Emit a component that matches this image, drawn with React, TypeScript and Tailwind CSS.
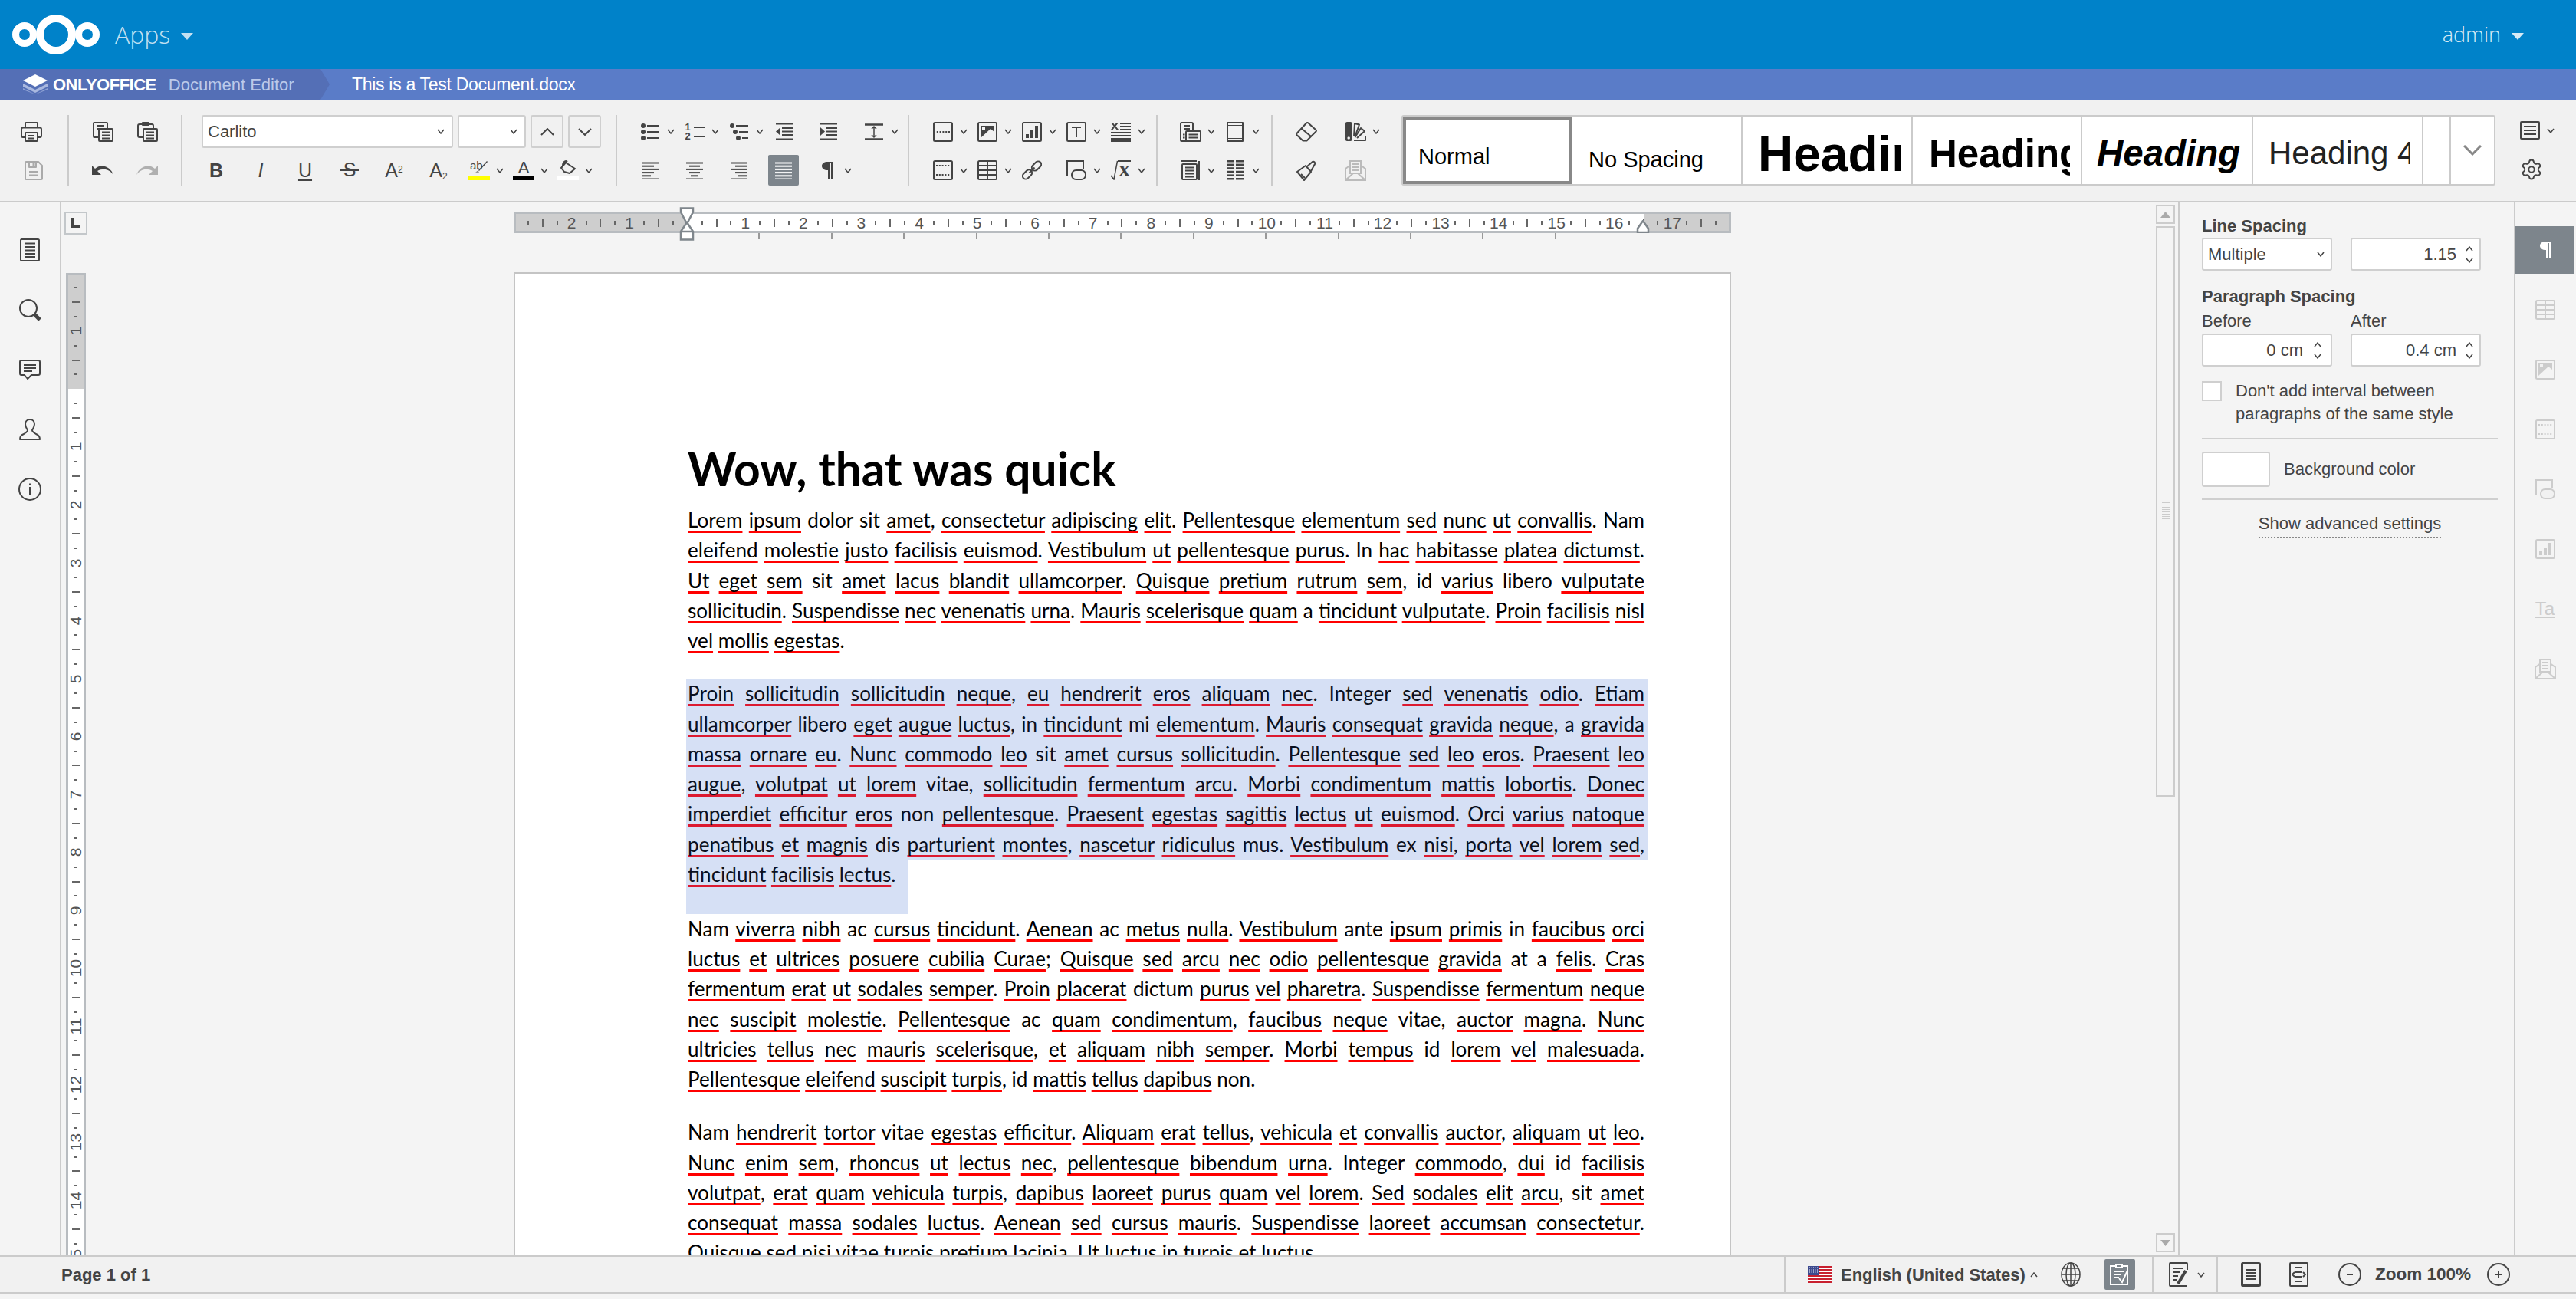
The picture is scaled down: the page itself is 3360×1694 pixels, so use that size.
import React from 'react';
import { Settings } from 'lucide-react';

const D = '#444';
const BG = '#f1f1f1';
const Svg = ({ w, h, children, c = D, sw = 2 }: { w: number; h: number; children: React.ReactNode; c?: string; sw?: number }) => (
  <svg width={w} height={h} viewBox={`0 0 ${w} ${h}`} fill="none" stroke={c} strokeWidth={sw} strokeLinejoin="round" className="shrink-0">
    {children}
  </svg>
);
const Caret = ({ c = D, up = false }: { c?: string; up?: boolean }) => (
  <svg width="10" height="7" viewBox="0 0 10 7" fill="none" stroke={c} strokeWidth="1.5" className="shrink-0 ml-[-2px]">
    <path d={up ? 'M1 6L5 1L9 6' : 'M1 1L5 6L9 1'} />
  </svg>
);
const Align = ({ rows, c = D }: { rows: [number, number][]; c?: string }) => (
  <svg width="22" height="23" viewBox="0 0 22 23" fill={c} className="shrink-0">
    {rows.map(([x, w], i) => <rect key={i} x={x} y={0.5 + i * 4.2} width={w} height="2" />)}
  </svg>
);
const AlignL = () => <Align rows={[[0, 22], [0, 16], [0, 22], [0, 16], [0, 12], [0, 22]]} />;
const AlignC = () => <Align rows={[[0, 22], [4, 14], [0, 22], [4, 14], [6, 10], [0, 22]]} />;
const AlignR = () => <Align rows={[[0, 22], [6, 16], [0, 22], [6, 16], [10, 12], [0, 22]]} />;
const AlignJ = () => <Align rows={[[0, 22], [0, 22], [0, 22], [0, 22], [0, 22], [0, 22]]} c="#fff" />;

const Print = () => (
  <Svg w={28} h={26}>
    <path d="M6 8V2a1 1 0 0 1 1-1h14a1 1 0 0 1 1 1v6" />
    <rect x="1" y="7.5" width="26" height="12.5" rx="2" />
    <rect x="6" y="14" width="16" height="11" rx="1" fill={BG} />
    <path d="M10 18h8M10 21.5h8" />
  </Svg>
);
const Save = () => (
  <Svg w={24} h={25} c="#aaa">
    <path d="M2 1h16l5 5v17a1 1 0 0 1-1 1H2a1 1 0 0 1-1-1V2a1 1 0 0 1 1-1z" />
    <path d="M6 1v7h9V1" />
    <path d="M6 14h12M6 18.5h12" />
    <rect x="10.5" y="2" width="3" height="4" fill="#aaa" stroke="none" />
  </Svg>
);
const Copy = () => (
  <Svg w={27} h={26}>
    <rect x="1" y="1" width="18" height="19" rx="1" />
    <path d="M5 5h10M5 9h5" />
    <rect x="8" y="9" width="18" height="16" rx="1" fill={BG} />
    <path d="M12 13.5h10M12 17.5h10M12 21.5h10" />
  </Svg>
);
const Paste = () => (
  <Svg w={27} h={26}>
    <rect x="1" y="3" width="20" height="17" rx="2" />
    <rect x="6" y="0" width="10" height="5" rx="1" fill={D} stroke="none" />
    <rect x="8" y="9" width="18" height="16" rx="1" fill={BG} />
    <path d="M12 13.5h10M12 17.5h10M12 21.5h10" />
  </Svg>
);
const Undo = () => (
  <svg width="28" height="14" viewBox="0 0 28 14" fill={D} className="shrink-0">
    <path d="M0 1v12h12L7 8c7-4 15-3 21 5C24 2 12-2 4 5z" />
  </svg>
);
const Redo = () => (
  <svg width="28" height="14" viewBox="0 0 28 14" fill="#b0b0b0" className="shrink-0">
    <path d="M28 1v12H16l5-5C14 4 6 5 0 13 4 2 16-2 24 5z" />
  </svg>
);
const Bullets = () => (
  <svg width="24" height="22" viewBox="0 0 24 22" fill={D} className="shrink-0">
    <circle cx="3" cy="3" r="3" /><rect x="8" y="2" width="16" height="2" />
    <circle cx="3" cy="11" r="3" /><rect x="8" y="10" width="16" height="2" />
    <circle cx="3" cy="19" r="3" /><rect x="8" y="18" width="16" height="2" />
  </svg>
);
const Numbers = () => (
  <div className="w-[25px] h-[24px] text-[#444] text-[13px] leading-[12px] font-bold flex flex-col">
    <div className="flex items-center gap-[4px] h-[12px]"><span className="w-[7px]">1</span><span className="w-[16px] h-[2px] bg-[#444]" /></div>
    <div className="flex items-center gap-[4px] h-[12px]"><span className="w-[7px]">2</span><span className="w-[16px] h-[2px] bg-[#444]" /></div>
  </div>
);
const Multi = () => (
  <svg width="25" height="22" viewBox="0 0 25 22" fill={D} className="shrink-0">
    <circle cx="3" cy="3" r="3" /><rect x="8" y="2" width="16" height="2" />
    <circle cx="7" cy="11" r="3" /><rect x="12" y="10" width="12" height="2" />
    <circle cx="11" cy="19" r="3" /><rect x="16" y="18" width="8" height="2" />
  </svg>
);
const Indent = ({ inc = false }: { inc?: boolean }) => (
  <svg width="22" height="23" viewBox="0 0 22 23" fill={D} className="shrink-0">
    <rect x="0" y="0.5" width="22" height="2" /><rect x="8" y="6" width="14" height="2" /><rect x="8" y="10.5" width="14" height="2" /><rect x="8" y="15" width="14" height="2" /><rect x="0" y="20.5" width="22" height="2" />
    <path d={inc ? 'M0 6v11l6-5.5z' : 'M6 6v11L0 11.5z'} />
  </svg>
);
const LineSp = () => (
  <Svg w={24} h={22}>
    <path d="M0 1.5h24M0 20.5h24" strokeWidth="2.5" />
    <path d="M12 4v14M9 7l3-3 3 3M9 15l3 3 3-3" strokeWidth="1.5" />
  </Svg>
);
const Para = ({ c = D, inner = BG }: { c?: string; inner?: string }) => (
  <svg width="14" height="22" viewBox="0 0 14 22" className="shrink-0">
    <path d="M8 0h6v22H8V11C3 11 0 9 0 5.5S3 0 8 0z" fill={c} />
    <rect x="10" y="2" width="2" height="20" fill={inner} />
  </svg>
);
const PageBreak = () => (
  <Svg w={26} h={26}>
    <rect x="1" y="1" width="24" height="24" rx="1.5" />
    <path d="M1 13h24" strokeDasharray="2 1.8" />
  </Svg>
);
const HeaderFooter = ({ c = D }: { c?: string }) => (
  <Svg w={26} h={26} c={c}>
    <rect x="1" y="1" width="24" height="24" rx="1.5" />
    <path d="M4 7h18M4 19h18" strokeDasharray="2 1.8" />
  </Svg>
);
const ImageIc = ({ c = D }: { c?: string }) => (
  <svg width="26" height="26" viewBox="0 0 26 26" fill="none" stroke={c} strokeWidth="2" className="shrink-0">
    <rect x="1" y="1" width="24" height="24" rx="1.5" />
    <path d="M4 5h18v8l-5-4L4 21z" fill={c} stroke="none" />
    <rect x="6" y="6" width="4" height="4" fill="#f1f1f1" stroke="none" />
  </svg>
);
const ChartIc = ({ c = D }: { c?: string }) => (
  <svg width="26" height="26" viewBox="0 0 26 26" fill="none" stroke={c} strokeWidth="2" className="shrink-0">
    <rect x="1" y="1" width="24" height="24" rx="1.5" />
    <path d="M5 21v-5h4v5zM11 21v-10h4v10zM17 21V5h4v16z" fill={c} stroke="none" />
  </svg>
);
const TextBox = () => (
  <Svg w={26} h={26}>
    <rect x="1" y="1" width="24" height="24" rx="1.5" />
    <path d="M7 7h12M13 7v13" />
  </Svg>
);
const XList = () => (
  <svg width="26" height="26" viewBox="0 0 26 26" fill={D} stroke="none" className="shrink-0">
    <path d="M0 1h2.6l2.4 3 2.4-3H10L6.4 5.5 10 10H7.400L5 7 2.600 10H0l3.600-4.500z" />
    <rect x="12" y="1" width="14" height="2" /><rect x="12" y="5" width="14" height="2" /><rect x="12" y="9" width="14" height="2" /><rect x="0" y="13" width="26" height="2" /><rect x="0" y="17" width="26" height="2" /><rect x="0" y="21" width="26" height="2" /><rect x="0" y="24" width="26" height="2" />
  </svg>
);
const Table = ({ c = D }: { c?: string }) => (
  <svg width="26" height="26" viewBox="0 0 26 26" fill="none" stroke={c} strokeWidth="2" className="shrink-0">
    <rect x="1" y="1" width="24" height="24" rx="1.5" />
    <path d="M1 7h24M1 13h24M1 19h24M13 1v24" />
  </svg>
);
const LinkIc = () => (
  <Svg w={26} h={26}>
    <rect x="12" y="3.500" width="14" height="8" rx="4" transform="rotate(-45 19 7.500)" />
    <rect x="0" y="14.500" width="14" height="8" rx="4" transform="rotate(-45 7 18.500)" />
    <path d="M9.500 16.500l7-7" />
  </Svg>
);
const ShapeIc = ({ c = D }: { c?: string }) => (
  <svg width="26" height="26" viewBox="0 0 26 26" fill="none" stroke={c} strokeWidth="2" className="shrink-0">
    <path d="M1 21V1h21v11" />
    <rect x="7" y="13" width="18" height="12" rx="5.500" fill="#f1f1f1" />
  </svg>
);
const Equation = () => (
  <div className="flex h-[26px] w-[26px]">
    <svg width="9" height="26" viewBox="0 0 9 26" fill="none" stroke={D} strokeWidth="1.5" className="shrink-0"><path d="M0 20l4 5L8.500 1" /></svg>
    <span className="border-t-2 border-[#444] w-[17px] h-[26px] text-[29px] leading-[19px] font-bold text-[#444] text-center [font-family:'Liberation_Serif',serif]">x</span>
  </div>
);
const Flow = () => (
  <Svg w={28} h={26}>
    <rect x="1" y="1" width="16" height="24" rx="1.5" />
    <path d="M5 5h8M5 9h8" />
    <rect x="8" y="12" width="19" height="13" rx="1" fill={BG} />
    <path d="M11.500 16.500h12M11.500 20.500h12M4 16.500h2.500M4 20.500h2.500" />
  </Svg>
);
const Margins = () => (
  <Svg w={22} h={26}>
    <rect x="1" y="1" width="20" height="24" />
    <path d="M4.500 1v24M17.500 1v24M1 4.500h20M1 21.500h20" strokeWidth="1" />
  </Svg>
);
const Columns = () => (
  <Svg w={24} h={26}>
    <path d="M0 1h20M23 1v25" />
    <rect x="1" y="5" width="19" height="20" rx="1" />
    <path d="M5 9.500h11M5 13.500h11M5 17.500h11M5 21.500h11" />
  </Svg>
);
const DashList = () => (
  <svg width="22" height="26" viewBox="0 0 22 26" fill={D} className="shrink-0">
    {[0, 4.6, 9.2, 13.8, 18.4, 23].map((y) => <React.Fragment key={y}><rect x="0" y={y} width="10" height="2.500" /><rect x="12" y={y} width="10" height="2.500" /></React.Fragment>)}
  </svg>
);
const Eraser = () => (
  <Svg w={28} h={26}>
    <path d="M14 1.500a2 2 0 0 1 2.500 0l10 9a1.500 1.500 0 0 1 0 2L14.500 24.500h-5L1.500 17a1.500 1.500 0 0 1 0-2z" />
    <path d="M7.500 8.500l12 10" />
  </Svg>
);
const Painter = () => (
  <Svg w={26} h={27}>
    <path d="M1 15L12 7l7 8-9 11z" />
    <path d="M14 8l7-6c2-1 4 1 3 3l-5 9" />
    <path d="M6 18l5 5" />
  </Svg>
);
const ColorSch = () => (
  <svg width="27" height="25" viewBox="0 0 27 25" fill="none" stroke={D} strokeWidth="2" strokeLinejoin="round" className="shrink-0">
    <rect x="0" y="0" width="8.500" height="25" rx="2" fill={D} stroke="none" />
    <circle cx="4.200" cy="21" r="1.800" fill="#f1f1f1" stroke="none" />
    <path d="M11 19l1-17 6 1.500-5 14" />
    <path d="M12.500 20L20 8l5 4-10 9" />
    <path d="M11 24h15v-6" />
  </svg>
);
const Mail = ({ c = '#bbb', bg = BG }: { c?: string; bg?: string }) => (
  <svg width="28" height="27" viewBox="0 0 28 27" fill="none" stroke={c} strokeWidth="2" className="shrink-0">
    <path d="M1 11v15h26V11L20 6M8 6l-7 5" />
    <rect x="7" y="1" width="14" height="16" fill={bg} />
    <path d="M10 5h8M10 9h8M10 13h8M1 26l10-9h6l10 9" />
  </svg>
);
const DocIc = () => (
  <Svg w={26} h={30}>
    <rect x="1" y="1" width="24" height="28" rx="1.500" />
    <path d="M6 6.500h14M6 11h14M6 15.500h14M6 20h14M6 24h14" />
  </Svg>
);
const Search = () => (
  <Svg w={29} h={29}>
    <circle cx="12" cy="12" r="11" />
    <path d="M20 20l7 7" strokeWidth="5" />
  </Svg>
);
const Comment = () => (
  <Svg w={28} h={27}>
    <path d="M3 1h22a2 2 0 0 1 2 2v15a2 2 0 0 1-2 2H16l-5 5-4-5H3a2 2 0 0 1-2-2V3a2 2 0 0 1 2-2z" />
    <path d="M6 7h16M6 11h16M6 15h11" />
  </Svg>
);
const User = () => (
  <Svg w={28} h={28}>
    <path d="M14 1c4 0 6 3 6 6 0 4-2 6-3 8 0 2 2 3 5 5 3 1 5 3 5 7H1c0-4 2-6 5-7 3-2 5-3 5-5-1-2-3-4-3-8 0-3 2-6 6-6z" />
  </Svg>
);
const Info = () => (
  <Svg w={30} h={30}>
    <circle cx="15" cy="15" r="14" />
    <path d="M15 12v10M15 7.500v2.500" />
  </Svg>
);
const Flag = () => (
  <svg width="32" height="22" viewBox="0 0 32 22" className="shrink-0">
    <rect width="32" height="22" fill="#fff" />
    {[0, 4, 8, 12, 16, 20].map((y) => <rect key={y} y={y} width="32" height="2" fill="#c8202f" />)}
    <rect width="15" height="12" fill="#3c4a8f" />
    <path d="M2 2h11M2 5h11M2 8h11" stroke="#fff" strokeWidth="1" strokeDasharray="1 1.500" />
  </svg>
);
const Globe = () => (
  <Svg w={26} h={32} sw={1.500}>
    <ellipse cx="13" cy="16" rx="12" ry="15" />
    <ellipse cx="13" cy="16" rx="6" ry="15" />
    <path d="M13 1v30M1 16h24M3 8h20M3 24h20" />
  </Svg>
);
const Spell = () => (
  <svg width="26" height="29" viewBox="0 0 26 29" fill="none" stroke="#fff" strokeWidth="2">
    <path d="M8 3H1v24h22V3h-7M8 1h8v4H8z" />
    <path d="M5 10h14M5 14h9M5 18h7M12 19l4 5 7-15" />
  </svg>
);
const Track = () => (
  <Svg w={25} h={32}>
    <path d="M24 10V2a1 1 0 0 0-1-1H2a1 1 0 0 0-1 1v28a1 1 0 0 0 1 1h21" />
    <path d="M5 8h13M5 13h9M5 18h7M5 23h5" />
    <path d="M12 28l10-17" strokeWidth="4" />
  </Svg>
);
const PageFit = () => (
  <Svg w={26} h={32}>
    <rect x="1.500" y="1.500" width="23" height="29" rx="1" strokeWidth="3" />
    <path d="M7 10h12M7 14h12M7 18h12M7 22h12" />
  </Svg>
);
const WidthFit = () => (
  <Svg w={25} h={32}>
    <rect x="1" y="1" width="23" height="30" rx="1" />
    <path d="M8 7h9M8 25h9M8 13h9M8 19h9M7 13l-3 3 3 3M18 13l3 3-3 3" />
  </Svg>
);
const CircleSign = ({ plus = false }: { plus?: boolean }) => (
  <Svg w={30} h={30}>
    <circle cx="15" cy="15" r="14" />
    <path d={plus ? 'M10 15h10M15 10v10' : 'M11 15h8'} />
  </Svg>
);
const Sq = () => (
  <Svg w={26} h={24}>
    <rect x="1" y="1" width="24" height="22" rx="1" />
    <path d="M5 7h16M5 12h16M5 17h16" />
  </Svg>
);

/* toolbar cells */
const Plain = ({ children }: { children: React.ReactNode }) => (
  <div className="w-[58px] h-full flex items-center justify-center shrink-0">{children}</div>
);
const Combo = ({ children, caret = true, cls = 'w-[58px]' }: { children: React.ReactNode; caret?: boolean; cls?: string }) => (
  <div className={`h-full flex items-center shrink-0 ${cls}`}>
    <div className="w-[48px] flex justify-center shrink-0">{children}</div>
    {caret && <Caret />}
  </div>
);
const Group = ({ w, children }: { w: string; children: React.ReactNode }) => (
  <div className={`${w} h-[92px] flex flex-col gap-[9px] border-r-2 border-[#cbcbcb] shrink-0`}>{children}</div>
);
const R1 = ({ cls, children }: { cls: string; children: React.ReactNode }) => <div className={`h-[43px] flex items-center ${cls}`}>{children}</div>;
const R2 = ({ cls, children }: { cls: string; children: React.ReactNode }) => <div className={`h-[40px] flex items-center ${cls}`}>{children}</div>;

const Glyph = ({ children, cls = '' }: { children: React.ReactNode; cls?: string }) => (
  <span className={`text-[#444] text-[25px] leading-[32px] ${cls}`}>{children}</span>
);

const Style = ({ w, cls, pad, children }: { w: string; cls: string; pad: string; children: React.ReactNode }) => (
  <div className={`${w} h-full border-r-2 border-[#cbcbcb] overflow-hidden whitespace-nowrap shrink-0 bg-white text-black flex items-end ${pad}`}>
    <span className={`block overflow-hidden ${cls}`}>{children}</span>
  </div>
);

/* ruler */
const quarters = Array.from({ length: 83 }, (_, i) => i - 11);
const HTick = ({ k }: { k: number }) => {
  const m = ((k % 4) + 4) % 4;
  return (
    <div className="w-[18.9px] shrink-0 h-full flex items-center justify-center">
      {m === 0 ? (
        k !== 0 && <span className="text-[21px] leading-none text-[#555]">{Math.abs(k / 4)}</span>
      ) : m === 2 ? (
        <span className="w-[2px] h-[11px] bg-[#666]" />
      ) : (
        <span className="w-[2px] h-[5px] bg-[#666]" />
      )}
    </div>
  );
};
const vquarters = Array.from({ length: 68 }, (_, i) => i - 7);
const VTick = ({ k }: { k: number }) => {
  const m = ((k % 4) + 4) % 4;
  return (
    <div className="h-[18.9px] shrink-0 w-full flex items-center justify-center">
      {m === 0 ? (
        k !== 0 && <span className="-rotate-90 text-[21px] leading-none text-[#555]">{Math.abs(k / 4)}</span>
      ) : m === 2 ? (
        <span className="h-[2px] w-[10px] bg-[#666]" />
      ) : (
        <span className="h-[2px] w-[5px] bg-[#666] mr-[2px]" />
      )}
    </div>
  );
};

/* doc text */
const P1 = [
  '*Lorem* *ipsum* dolor sit *amet*, *consectetur* *adipiscing* *elit*. *Pellentesque* *elementum* *sed* *nunc* *ut* *convallis*. Nam',
  '*eleifend* *molestie* *justo* *facilisis* *euismod*. *Vestibulum* *ut* *pellentesque* *purus*. In *hac* *habitasse* *platea* *dictumst*.',
  '*Ut* *eget* *sem* sit *amet* *lacus* *blandit* *ullamcorper*. *Quisque* *pretium* *rutrum* *sem*, id *varius* libero *vulputate*',
  '*sollicitudin*. *Suspendisse* *nec* *venenatis* *urna*. *Mauris* *scelerisque* *quam* a *tincidunt* *vulputate*. *Proin* *facilisis* *nisl*',
  '*vel* *mollis* *egestas*.',
];
const P2 = [
  '*Proin* *sollicitudin* *sollicitudin* *neque*, *eu* *hendrerit* *eros* *aliquam* *nec*. Integer *sed* *venenatis* *odio*. *Etiam*',
  '*ullamcorper* libero *eget* *augue* *luctus*, in *tincidunt* mi *elementum*. *Mauris* *consequat* *gravida* *neque*, a *gravida*',
  '*massa* *ornare* *eu*. *Nunc* *commodo* *leo* sit *amet* *cursus* *sollicitudin*. *Pellentesque* *sed* *leo* *eros*. *Praesent* *leo*',
  '*augue*, *volutpat* *ut* *lorem* vitae, *sollicitudin* *fermentum* *arcu*. *Morbi* *condimentum* *mattis* *lobortis*. *Donec*',
  '*imperdiet* *efficitur* *eros* non *pellentesque*. *Praesent* *egestas* *sagittis* *lectus* *ut* *euismod*. *Orci* *varius* *natoque*',
  '*penatibus* *et* *magnis* dis *parturient* *montes*, *nascetur* *ridiculus* mus. *Vestibulum* ex *nisi*, *porta* *vel* *lorem* *sed*,',
  '*tincidunt* *facilisis* *lectus*.',
];
const P3 = [
  'Nam *viverra* *nibh* ac *cursus* *tincidunt*. *Aenean* ac *metus* *nulla*. *Vestibulum* ante *ipsum* *primis* in *faucibus* *orci*',
  '*luctus* *et* *ultrices* *posuere* *cubilia* *Curae*; *Quisque* *sed* *arcu* *nec* *odio* *pellentesque* *gravida* at a *felis*. *Cras*',
  '*fermentum* *erat* *ut* *sodales* *semper*. *Proin* *placerat* dictum *purus* *vel* *pharetra*. *Suspendisse* *fermentum* *neque*',
  '*nec* *suscipit* *molestie*. *Pellentesque* ac *quam* *condimentum*, *faucibus* *neque* vitae, *auctor* *magna*. *Nunc*',
  '*ultricies* *tellus* *nec* *mauris* *scelerisque*, *et* *aliquam* *nibh* *semper*. *Morbi* *tempus* id *lorem* *vel* *malesuada*.',
  '*Pellentesque* *eleifend* *suscipit* *turpis*, id *mattis* *tellus* *dapibus* non.',
];
const P4 = [
  'Nam *hendrerit* *tortor* vitae *egestas* *efficitur*. *Aliquam* *erat* *tellus*, *vehicula* *et* *convallis* *auctor*, *aliquam* *ut* *leo*.',
  '*Nunc* *enim* *sem*, *rhoncus* *ut* *lectus* *nec*, *pellentesque* *bibendum* *urna*. Integer *commodo*, *dui* id *facilisis*',
  '*volutpat*, *erat* *quam* *vehicula* *turpis*, *dapibus* *laoreet* *purus* *quam* *vel* *lorem*. *Sed* *sodales* *elit* *arcu*, sit *amet*',
  '*consequat* *massa* *sodales* *luctus*. *Aenean* *sed* *cursus* *mauris*. *Suspendisse* *laoreet* *accumsan* *consectetur*.',
  '*Quisque* *sed* *nisi* *vitae* *turpis* *pretium* *lacinia*. *Ut* *luctus* *in* *turpis* *et* *luctus*.',
];
const Words = ({ s, sel }: { s: string; sel?: boolean }) => (
  <>
    {s.split('*').map((t, i) =>
      i % 2 ? (
        <span key={i} className={`underline decoration-[2.5px] underline-offset-[4px] [text-decoration-skip-ink:none] ${sel ? 'decoration-[#dc1a30]' : 'decoration-[#ff0000]'}`}>{t}</span>
      ) : (
        <span key={i}>{t}</span>
      ),
    )}
  </>
);
const Para0 = ({ lines }: { lines: string[] }) => (
  <div className="mb-[30px]">
    {lines.map((l, i) => (
      <div key={i} className={`h-[39.25px] leading-[39.25px] ${i === lines.length - 1 ? 'whitespace-nowrap' : 'w-[1248px] whitespace-normal [text-align:justify] [text-align-last:justify]'}`}>
        <Words s={l} />
      </div>
    ))}
  </div>
);

/* right panel */
const Spin = () => (
  <div className="flex flex-col gap-[8px] items-center w-[12px]">
    <Caret up /><Caret />
  </div>
);
const Field = ({ children, cls = '' }: { children: React.ReactNode; cls?: string }) => (
  <div className={`w-[170px] h-[43px] bg-white border-2 border-[#cfcfcf] rounded-[3px] flex items-center text-[22px] text-[#444] ${cls}`}>{children}</div>
);
const SideIc = ({ children, active }: { children: React.ReactNode; active?: boolean }) => (
  <div className={`h-[62px] flex items-center justify-center mb-[16px] ${active ? 'bg-[#7d858c]' : ''}`}>{children}</div>
);
const LeftIc = ({ children }: { children: React.ReactNode }) => (
  <div className="h-[78px] flex items-center justify-center">{children}</div>
);

export default function App() {
  return (
    <div className="w-[3360px] h-[1694px] flex flex-col overflow-hidden bg-[#f4f4f4] [font-family:'Liberation_Sans',Arial,sans-serif]">
      {/* Top bar */}
      <div className="h-[90px] shrink-0 bg-[#0082c9] flex items-center pl-[16px] pr-[68px]">
        <svg width="114" height="52" viewBox="0 0 114 52" fill="none" stroke="#fff" className="shrink-0">
          <circle cx="57" cy="26" r="21" strokeWidth="10" />
          <circle cx="16" cy="26" r="11.5" strokeWidth="9" />
          <circle cx="98" cy="26" r="11.5" strokeWidth="9" />
        </svg>
        <span className="ml-[20px] text-[32px] leading-[44px] text-[#c3e0f1] [font-family:'Open_Sans',sans-serif] font-light">Apps</span>
        <svg width="16" height="9" viewBox="0 0 16 9" fill="#c3e0f1" className="ml-[14px] mt-[4px]"><path d="M0 0h16L8 9z" /></svg>
        <div className="flex-1" />
        <span className="text-[27px] leading-[38px] text-[#d6eaf5] [font-family:'Open_Sans',sans-serif] font-light">admin</span>
        <svg width="16" height="9" viewBox="0 0 16 9" fill="#d6eaf5" className="ml-[14px] mt-[4px]"><path d="M0 0h16L8 9z" /></svg>
      </div>
      {/* Doc bar */}
      <div className="h-[40px] shrink-0 bg-[#5a7cc8] flex items-center">
        <div className="w-[430px] h-full bg-[#546fb6] [clip-path:polygon(0_0,418px_0,430px_50%,418px_100%,0_100%)] flex items-center pl-[30px]">
          <svg width="32" height="26" viewBox="0 0 32 26" className="shrink-0">
            <path d="M16 0l16 8-16 8L0 8z" fill="#fff" />
            <path d="M0 12l16 8 16-8v4l-16 8-16-8z" fill="#a9b8df" />
            <path d="M0 18l16 8 16-8v2l-16 6-16-6z" fill="#8fa2d4" />
          </svg>
          <span className="ml-[7px] text-[22px] font-bold text-white tracking-[-0.5px]">ONLYOFFICE</span>
          <span className="ml-[16px] text-[22px] text-[#bccaea]">Document Editor</span>
        </div>
        <span className="ml-[29px] text-[23px] text-white tracking-[-0.3px]">This is a Test Document.docx</span>
      </div>
      {/* Toolbar */}
      <div className="h-[134px] shrink-0 bg-[#f1f1f1] border-b-2 border-[#cbcbcb] pt-[20px] flex items-start">
        <Group w="w-[90px]">
          <R1 cls="ml-[12px]"><Plain><Print /></Plain></R1>
          <R2 cls="ml-[15px]"><Plain><Save /></Plain></R2>
        </Group>
        <Group w="w-[148px]">
          <R1 cls="ml-[15px]"><Plain><Copy /></Plain><Plain><Paste /></Plain></R1>
          <R2 cls="ml-[15px]"><Plain><Undo /></Plain><Plain><Redo /></Plain></R2>
        </Group>
        <Group w="w-[567px]">
          <R1 cls="ml-[25px] gap-[6px]">
            <div className="w-[328px] h-[43px] bg-white border-2 border-[#cfcfcf] rounded-[3px] flex items-center justify-between pl-[6px] pr-[9px] text-[22px] text-[#444]">Carlito<Caret /></div>
            <div className="w-[89px] h-[43px] bg-white border-2 border-[#cfcfcf] rounded-[3px] flex items-center justify-end pr-[9px]"><Caret /></div>
            <div className="w-[43px] h-[43px] border-2 border-[#cfcfcf] rounded-[3px] flex items-center justify-center"><svg width="18" height="10" viewBox="0 0 18 10" fill="none" stroke={D} strokeWidth="2"><path d="M1 9l8-8 8 8" /></svg></div>
            <div className="w-[43px] h-[43px] border-2 border-[#cfcfcf] rounded-[3px] flex items-center justify-center"><svg width="18" height="10" viewBox="0 0 18 10" fill="none" stroke={D} strokeWidth="2"><path d="M1 1l8 8 8-8" /></svg></div>
          </R1>
          <R2 cls="ml-[15px]">
            <Plain><Glyph cls="font-bold">B</Glyph></Plain>
            <Plain><Glyph cls="italic font-light">I</Glyph></Plain>
            <Plain><Glyph cls="underline underline-offset-[3px]">U</Glyph></Plain>
            <Plain>
              <svg width="26" height="26" viewBox="0 0 26 26" fill={D} className="shrink-0">
                <text x="13" y="21" textAnchor="middle" fontSize="25" fontFamily="'Liberation Sans',sans-serif">S</text>
                <rect x="1" y="12" width="24" height="2" />
              </svg>
            </Plain>
            <Plain><span className="text-[#444] text-[25px] leading-[32px]">A<sup className="text-[12px]">2</sup></span></Plain>
            <Plain><span className="text-[#444] text-[25px] leading-[32px]">A<sub className="text-[12px]">2</sub></span></Plain>
            <Combo>
              <div className="flex flex-col items-center w-[28px] gap-[3px]">
                <svg width="24" height="16" viewBox="0 0 24 16" fill={D} className="shrink-0">
                  <text x="0" y="11" fontSize="15" fontFamily="'Liberation Sans',sans-serif">ab</text>
                  <path d="M23 1L12 13l-1-1L22 0zM10.500 13l1.500 1.500H7z" />
                </svg>
                <span className="w-[28px] h-[6px] bg-[#ffff00]" />
              </div>
            </Combo>
            <Combo>
              <div className="flex flex-col items-center w-[28px] gap-[2px]">
                <span className="text-[22px] leading-[17px] text-[#444]">A</span>
                <span className="w-[28px] h-[6px] bg-black" />
              </div>
            </Combo>
            <Combo>
              <div className="flex flex-col items-center w-[28px] gap-[2px]">
                <svg width="22" height="18" viewBox="0 0 22 18" fill="none" stroke={D} strokeWidth="2" strokeLinejoin="round" className="shrink-0">
                  <path d="M8 3L20 11l-7 6-7-2-4-5zM4 7c0-5 4-7 6-5" />
                </svg>
                <span className="w-[28px] h-[6px] bg-white" />
              </div>
            </Combo>
          </R2>
        </Group>
        <Group w="w-[381px]">
          <R1 cls="ml-[19px]">
            <Combo><Bullets /></Combo>
            <Combo><Numbers /></Combo>
            <Combo cls="w-[54px]"><Multi /></Combo>
            <Plain><Indent /></Plain>
            <Plain><Indent inc /></Plain>
            <Combo cls="w-[58px] ml-[6px]"><LineSp /></Combo>
          </R1>
          <R2 cls="ml-[14px]">
            <Plain><AlignL /></Plain>
            <Plain><AlignC /></Plain>
            <Plain><AlignR /></Plain>
            <Plain><div className="w-[40px] h-[40px] rounded-[2px] bg-[#7d858c] flex items-center justify-center"><AlignJ /></div></Plain>
            <Combo cls="w-[58px] ml-[4px]"><Para /></Combo>
          </R2>
        </Group>
        <Group w="w-[324px]">
          <R1 cls="ml-[20px]">
            <Combo><PageBreak /></Combo><Combo><ImageIc /></Combo><Combo><ChartIc /></Combo><Combo><TextBox /></Combo><Combo><XList /></Combo>
          </R1>
          <R2 cls="ml-[20px]">
            <Combo><HeaderFooter /></Combo><Combo><Table /></Combo><Combo caret={false}><LinkIc /></Combo><Combo><ShapeIc /></Combo><Combo><Equation /></Combo>
          </R2>
        </Group>
        <Group w="w-[150px]">
          <R1 cls="ml-[19px]"><Combo><Flow /></Combo><Combo><Margins /></Combo></R1>
          <R2 cls="ml-[19px]"><Combo><Columns /></Combo><Combo><DashList /></Combo></R2>
        </Group>
        <div className="w-[168px] h-[92px] flex flex-col gap-[9px] shrink-0">
          <R1 cls="ml-[20px]"><Combo caret={false}><Eraser /></Combo><Combo cls="w-[58px] ml-[6px]"><ColorSch /></Combo></R1>
          <R2 cls="ml-[20px]"><Combo caret={false}><Painter /></Combo><Combo caret={false} cls="w-[58px] ml-[6px]"><Mail /></Combo></R2>
        </div>
        {/* gallery */}
        <div className="w-[1427px] h-[92px] border-2 border-[#cbcbcb] rounded-[3px] flex shrink-0 bg-white">
          <div className="w-[220px] h-full border-[4px] border-[#888] bg-white flex items-end pl-[16px] pb-[14px] text-[29px] leading-[36px] text-black shrink-0">Normal</div>
          <Style w="w-[223px]" pad="pl-[22px] pb-[14px]" cls="text-[29px] leading-[36px]">No Spacing</Style>
          <Style w="w-[222px]" pad="pl-[20px] pr-[14px] pb-[0px]" cls="text-[64px] leading-[78px] font-bold">Heading 1</Style>
          <Style w="w-[221px]" pad="pl-[21px] pr-[14px] pb-[2px]" cls="text-[51px] leading-[74px] font-bold">Heading 2</Style>
          <Style w="w-[223px]" pad="pl-[19px] pr-[14px] pb-[6px]" cls="text-[47.5px] leading-[68px] font-bold italic">Heading 3</Style>
          <Style w="w-[222px]" pad="pl-[20px] pr-[15px] pb-[9px]" cls="text-[42px] leading-[62px] text-[#222]">Heading 4</Style>
          <div className="w-[36px] h-full border-r-2 border-[#cbcbcb] shrink-0" />
          <div className="flex-1 flex items-center justify-center">
            <svg width="24" height="14" viewBox="0 0 24 14" fill="none" stroke="#888" strokeWidth="3"><path d="M1 1l11 11L23 1" /></svg>
          </div>
        </div>
        <div className="ml-[32px] flex flex-col items-start">
          <div className="h-[40px] flex items-center gap-[11px]"><Sq /><Caret /></div>
          <div className="h-[40px] mt-[11px] flex items-center"><Settings size={30} strokeWidth={1.5} color={D} /></div>
        </div>
      </div>
      {/* Main */}
      <div className="flex-1 min-h-0 flex">
        <div className="w-[80px] shrink-0 border-r-2 border-[#cbcbcb] flex flex-col pt-[23px]">
          <LeftIc><DocIc /></LeftIc><LeftIc><Search /></LeftIc><LeftIc><Comment /></LeftIc><LeftIc><User /></LeftIc><LeftIc><Info /></LeftIc>
        </div>
        {/* canvas */}
        <div className="w-[2761px] shrink-0 flex overflow-hidden">
          <div className="w-[40px] shrink-0 flex flex-col items-start">
            <div className="ml-[4px] mt-[12px] w-[30px] h-[30px] border-2 border-[#c3c7ca] flex items-center justify-center">
              <span className="w-[12px] h-[13px] border-l-[4px] border-b-[4px] border-[#444]" />
            </div>
            <div className="ml-[6px] mt-[50px] w-[26px] h-[1300px] overflow-hidden border-x-[3px] border-t-[3px] border-[#b8bcc0] bg-[linear-gradient(to_bottom,#cecece_148px,#fff_148px)] pt-[7px] flex flex-col">
              {vquarters.map((k) => <VTick key={k} k={k} />)}
            </div>
          </div>
          <div className="w-[2692px] shrink-0 pl-[550px] flex flex-col">
            <div className="w-[1588px] mt-[12px] h-[28px] relative border-[3px] border-[#b8bcc0] bg-[linear-gradient(to_right,#cecece_224px,#fff_224px,#fff_1471px,#cecece_1471px)] flex pl-[6.5px] overflow-visible">
              <div className="flex h-full overflow-hidden w-full">
                {quarters.map((k) => <HTick key={k} k={k} />)}
              </div>
              <svg width="20" height="44" viewBox="0 0 20 44" fill="#fff" stroke="#7f868c" strokeWidth="2.5" className="absolute left-[213px] -top-[9px]">
                <path d="M2 1.5h16v5L11 20h-2L2 6.5z" />
                <path d="M10 20l8 12v10.5H2V32z" />
                <path d="M2 32h16" />
              </svg>
              <svg width="18" height="17" viewBox="0 0 18 17" fill="#fff" stroke="#7f868c" strokeWidth="2.5" className="absolute left-[1461px] top-[8px]">
                <path d="M9 1l7 10v5H2v-5z" />
              </svg>
            </div>
            <div className="flex h-[8px] w-[1588px] pl-[227px]">
              {Array.from({ length: 12 }).map((_, i) => (
                <div key={i} className="w-[94.4px] shrink-0 h-full border-r-2 border-[#999]" />
              ))}
            </div>
            <div className="w-[1588px] mt-[43px] flex-1 min-h-0 overflow-hidden bg-white border-2 border-b-0 border-[#c4c4c4] pl-[225px] pr-[111px] pt-[219px] text-[26.1px] text-black [font-family:Lato,sans-serif]">
              <div className="text-[60.5px] leading-[70px] font-bold h-[83px] whitespace-nowrap">Wow, that was quick</div>
              <Para0 lines={P1} />
              <div>
                {P2.map((l, i) => (
                  <div key={i} className={`-ml-[2px] pl-[2px] leading-[39.25px] ${i === 6 ? 'w-[290px] h-[71px] whitespace-nowrap' : 'w-[1255px] pr-[5px] h-[39.25px] [text-align:justify] [text-align-last:justify]'} bg-[#d6e0f5] text-[#0b1020]`}>
                    <Words s={l} sel />
                  </div>
                ))}
              </div>
              <Para0 lines={P3} />
              <Para0 lines={P4} />
            </div>
          </div>
          <div className="w-[29px] shrink-0 flex flex-col items-start pt-[3px] gap-[3px]">
            <div className="w-[25px] h-[25px] border-2 border-[#ccc] flex items-center justify-center"><svg width="13" height="8" viewBox="0 0 13 8" fill="#aaa"><path d="M6.5 0L13 8H0z" /></svg></div>
            <div className="w-[25px] h-[744px] border-2 border-[#ccc] flex items-center justify-center">
              <span className="w-[10px] h-[24px] bg-[repeating-linear-gradient(to_bottom,#ccc_0,#ccc_1px,transparent_1px,transparent_3px)]" />
            </div>
            <div className="flex-1" />
            <div className="w-[25px] h-[25px] border-2 border-[#ccc] mb-[4px] flex items-center justify-center"><svg width="13" height="8" viewBox="0 0 13 8" fill="#aaa"><path d="M6.5 8L13 0H0z" /></svg></div>
          </div>
        </div>
        {/* Right panel */}
        <div className="w-[440px] shrink-0 border-x-2 border-[#cbcbcb] pl-[29px] pr-[21px] pt-[18px] text-[22px] text-[#444]">
          <div className="font-bold leading-[26px]">Line Spacing</div>
          <div className="flex gap-[24px] mt-[2px]">
            <Field cls="justify-between pl-[6px] pr-[8px]">Multiple<Caret /></Field>
            <Field cls="justify-end pr-[6px] gap-[12px]">1.15<Spin /></Field>
          </div>
          <div className="font-bold leading-[26px] mt-[21px]">Paragraph Spacing</div>
          <div className="flex gap-[24px] mt-[6px] leading-[26px]"><span className="w-[170px]">Before</span><span>After</span></div>
          <div className="flex gap-[24px] mt-[3px]">
            <Field cls="justify-end pr-[10px] gap-[14px]">0 cm<Spin /></Field>
            <Field cls="justify-end pr-[6px] gap-[12px]">0.4 cm<Spin /></Field>
          </div>
          <div className="flex mt-[19px]">
            <span className="w-[26px] h-[26px] bg-white border-2 border-[#cfcfcf] shrink-0" />
            <div className="ml-[18px] leading-[30px] -mt-[2px]">Don't add interval between<br />paragraphs of the same style</div>
          </div>
          <div className="h-[2px] bg-[#cfcfcf] mt-[16px]" />
          <div className="flex items-center mt-[16px]">
            <span className="w-[89px] h-[46px] bg-white border-2 border-[#cfcfcf] rounded-[3px]" />
            <span className="ml-[18px] -mt-[2px]">Background color</span>
          </div>
          <div className="h-[2px] bg-[#cfcfcf] mt-[15px]" />
          <div className="flex justify-center mt-[16px]">
            <span className="border-b-2 border-dotted border-[#888] leading-[30px] pb-[2px]">Show advanced settings</span>
          </div>
        </div>
        <div className="flex-1 flex flex-col pt-[31px] pr-[2px]">
          <SideIc active><Para c="#fff" inner="#7d858c" /></SideIc>
          <SideIc><Table c="#ccc" /></SideIc>
          <SideIc><ImageIc c="#ccc" /></SideIc>
          <SideIc><HeaderFooter c="#ccc" /></SideIc>
          <SideIc><ShapeIc c="#ccc" /></SideIc>
          <SideIc><ChartIc c="#ccc" /></SideIc>
          <SideIc><span className="text-[24px] text-[#ccc] underline leading-[30px]">Ta</span></SideIc>
          <SideIc><Mail c="#ccc" bg="#f4f4f4" /></SideIc>
        </div>
      </div>
      {/* Status bar */}
      <div className="h-[50px] shrink-0 bg-[#f1f1f1] border-y-2 border-[#cbcbcb] flex items-center text-[22px] font-bold text-[#444]">
        <div className="w-[2327px] pl-[80px] shrink-0">Page 1 of 1</div>
        <div className="w-[482px] h-full shrink-0 border-x-2 border-[#cbcbcb] flex items-center pl-[29px]">
          <Flag />
          <span className="ml-[11px] w-[249px] shrink-0 whitespace-nowrap">English (United States)</span>
          <Caret up />
          <span className="ml-[30px]"><Globe /></span>
          <span className="ml-[31px] w-[40px] h-[40px] rounded-[2px] bg-[#7d858c] flex items-center justify-center"><Spell /></span>
        </div>
        <div className="w-[84px] h-full shrink-0 border-r-2 border-[#cbcbcb] flex items-center pl-[20px] gap-[14px]"><Track /><Caret /></div>
        <div className="flex items-center h-full pl-[30px]">
          <PageFit />
          <span className="ml-[37px]"><WidthFit /></span>
          <span className="ml-[39px]"><CircleSign /></span>
          <span className="ml-[18px] w-[125px] whitespace-nowrap text-[22.5px]">Zoom 100%</span>
          <span className="ml-[21px]"><CircleSign plus /></span>
        </div>
      </div>
      <div className="h-[7px] shrink-0 bg-[#f4f4f4]" />
    </div>
  );
}
